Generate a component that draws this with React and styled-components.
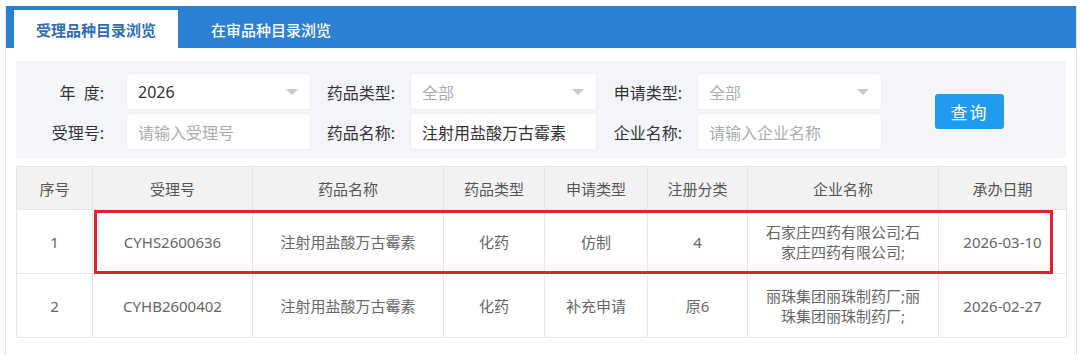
import styled, { createGlobalStyle } from 'styled-components';

const GlobalStyle = createGlobalStyle`
  html, body {
    margin: 0;
    padding: 0;
    background: #fff;
  }
  body {
    font-family: "Noto Sans", "Noto Sans CJK SC", sans-serif;
    color: #333;
  }
  * {
    box-sizing: border-box;
  }
`;

const Page = styled.div`
  padding: 6px 3px 0 5px;
`;

const Frame = styled.div`
  border-left: 1px solid #e3e6eb;
  border-right: 1px solid #e3e6eb;
  min-height: 349px;
`;

const TabBar = styled.div`
  display: flex;
  align-items: flex-end;
  height: 42px;
  padding-left: 8px;
  background: #2b7fd4;
`;

const Tab = styled.div`
  height: 38px;
  display: flex;
  align-items: center;
  padding: 0 ${(p) => (p.$active ? '22px' : '33px')};
  font-size: 15px;
  font-weight: ${(p) => (p.$active ? 700 : 500)};
  color: ${(p) => (p.$active ? '#2f6db5' : '#fff')};
  background: ${(p) => (p.$active ? '#fff' : 'transparent')};
`;

const Content = styled.div`
  padding: 13px 10px 0 10px;
`;

const Filter = styled.div`
  display: grid;
  grid-template-columns: 110px 185px 99px 187px 100px 185px auto;
  grid-template-rows: 37px 37px;
  row-gap: 3px;
  align-items: center;
  padding: 12px 0 8px;
  background: #f3f5f8;
`;

const Label = styled.div`
  text-align: right;
  padding-right: ${(p) => p.$pr || 15}px;
  font-size: 16px;
  color: #333;
  white-space: pre;
`;

const Field = styled.div`
  position: relative;
  height: 37px;
  display: flex;
  align-items: center;
  padding: 0 11px;
  background: #fff;
  border: 1px solid #eceef2;
  border-radius: 3px;
  font-size: 16px;
  color: ${(p) => (p.$placeholder ? '#a9adb3' : '#333')};
`;

const Caret = styled.span`
  position: absolute;
  right: 12px;
  top: 15px;
  width: 0;
  height: 0;
  border-left: 6px solid transparent;
  border-right: 6px solid transparent;
  border-top: 6px solid #c6c9ce;
`;

const ButtonCell = styled.div`
  grid-row: 1 / span 2;
  grid-column: 7;
  padding-left: 53px;
`;

const Button = styled.button`
  width: 69px;
  height: 35px;
  border: none;
  border-radius: 3px;
  background: #1f9cf0;
  color: #fff;
  font-family: inherit;
  font-size: 17px;
  letter-spacing: 2px;
  cursor: pointer;
`;

const TableWrap = styled.div`
  position: relative;
  margin-top: 8px;
`;

const Table = styled.table`
  width: 100%;
  border-collapse: collapse;
  table-layout: fixed;
  font-size: 15px;
  color: #666;
  th, td {
    border: 1px solid #e6e6e6;
    text-align: center;
    padding: 0 12px;
  }
  th {
    height: 43px;
    font-weight: 400;
    color: #555;
    background: #f2f2f2;
  }
  td {
    height: 64px;
    line-height: 20px;
  }
`;

const Highlight = styled.div`
  position: absolute;
  left: 78px;
  top: 44px;
  width: 959px;
  height: 64px;
  border: 3px solid #e0232b;
  pointer-events: none;
`;

const columns = [
  { title: '序号', width: 76 },
  { title: '受理号', width: 160 },
  { title: '药品名称', width: 191 },
  { title: '药品类型', width: 101 },
  { title: '申请类型', width: 103 },
  { title: '注册分类', width: 100 },
  { title: '企业名称', width: 191 },
  { title: '承办日期', width: 128 },
];

const rows = [
  ['1', 'CYHS2600636', '注射用盐酸万古霉素', '化药', '仿制', '4', '石家庄四药有限公司;石家庄四药有限公司;', '2026-03-10'],
  ['2', 'CYHB2600402', '注射用盐酸万古霉素', '化药', '补充申请', '原6', '丽珠集团丽珠制药厂;丽珠集团丽珠制药厂;', '2026-02-27'],
];

export default function App() {
  return (
    <Page>
      <GlobalStyle />
      <Frame>
        <TabBar>
          <Tab $active>受理品种目录浏览</Tab>
          <Tab>在审品种目录浏览</Tab>
        </TabBar>
        <Content>
          <Filter>
            <Label $pr={22}>{'年  度:'}</Label>
            <Field>
              2026
              <Caret />
            </Field>
            <Label>药品类型:</Label>
            <Field $placeholder>
              全部
              <Caret />
            </Field>
            <Label>申请类型:</Label>
            <Field $placeholder>
              全部
              <Caret />
            </Field>
            <ButtonCell>
              <Button>查询</Button>
            </ButtonCell>
            <Label $pr={22}>受理号:</Label>
            <Field $placeholder>请输入受理号</Field>
            <Label>药品名称:</Label>
            <Field>注射用盐酸万古霉素</Field>
            <Label>企业名称:</Label>
            <Field $placeholder>请输入企业名称</Field>
          </Filter>
          <TableWrap>
            <Table>
              <colgroup>
                {columns.map((c) => (
                  <col key={c.title} style={{ width: c.width }} />
                ))}
              </colgroup>
              <thead>
                <tr>
                  {columns.map((c) => (
                    <th key={c.title}>{c.title}</th>
                  ))}
                </tr>
              </thead>
              <tbody>
                {rows.map((r) => (
                  <tr key={r[0]}>
                    {r.map((v, i) => (
                      <td key={i}>{v}</td>
                    ))}
                  </tr>
                ))}
              </tbody>
            </Table>
            <Highlight />
          </TableWrap>
        </Content>
      </Frame>
    </Page>
  );
}
